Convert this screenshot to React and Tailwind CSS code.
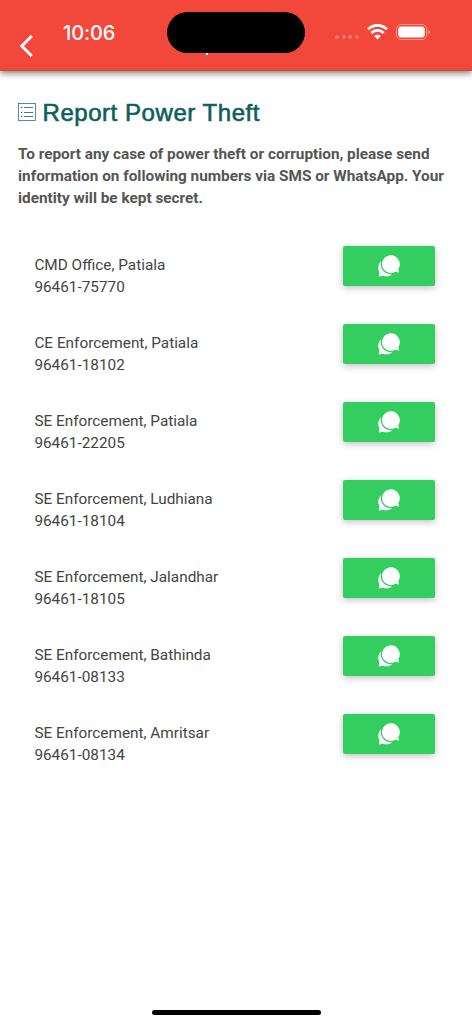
import React from "react";

const contacts = [
  { name: "CMD Office, Patiala", phone: "96461-75770" },
  { name: "CE Enforcement, Patiala", phone: "96461-18102" },
  { name: "SE Enforcement, Patiala", phone: "96461-22205" },
  { name: "SE Enforcement, Ludhiana", phone: "96461-18104" },
  { name: "SE Enforcement, Jalandhar", phone: "96461-18105" },
  { name: "SE Enforcement, Bathinda", phone: "96461-08133" },
  { name: "SE Enforcement, Amritsar", phone: "96461-08134" },
];

function ChatIcon() {
  return (
    <svg className="w-[22px] h-[22px]" viewBox="0 0 22 22" fill="white">
      <path d="M8 4.500A8.300 8.300 0 0 0 1.400 17.100L.8 21c0 .4.200.6.600.5l3.300-.8C8 22 12 21.500 15 18.500z" />
      {/* Front bubble, outlined in the button colour to separate it */}
      <path
        d="M12.900.200a8.900 8.900 0 1 0 4.500 16.600l3.100.8c.4.100.6-.1.500-.5l-.7-3.100A8.900 8.900 0 0 0 12.900.200z"
        stroke="#34cd60"
        strokeWidth="2.600"
        paintOrder="stroke"
      />
    </svg>
  );
}

function ListIcon() {
  return (
    <svg className="w-[18px] h-[18px]" viewBox="0 0 18 18" fill="none" stroke="#0d5f59">
      <rect x=".5" y=".5" width="17" height="17" strokeWidth=".7" />
      <path d="M6 4.500h9M6 9.500h9M6 13.500h9" strokeWidth=".8" />
      <path d="M3 4.500h1.200M3 9.500h1.200M3 13.500h1.200" strokeWidth="1.200" />
    </svg>
  );
}

function Header() {
  return (
    <header className="relative z-10 flex h-[71px] bg-[#f2483b] border-b border-[#db4136] shadow-[0_2px_7px_rgba(0,0,0,0.55)]">
      <button className="ml-5 mt-[35px] h-[22px]" aria-label="Back">
        <svg className="w-[13px] h-[22px]" viewBox="0 0 13 22" fill="none" stroke="white" strokeWidth="2.900">
          <path d="M11.800 1 1.900 11l9.900 10" />
        </svg>
      </button>
      <span className="ml-[30px] mt-[21px] w-[104px] text-[20px] leading-6 font-medium text-white font-['Inter',sans-serif] tracking-[-0.1px]">
        10:06
      </span>
      <div className="mt-[12px] w-[138px]">
        <div className="h-[41px] rounded-full bg-black" />
        {/* Descender of the title showing below the island */}
        <div className="ml-[39px] w-[2px] h-[2px] bg-white" />
      </div>
      <div className="ml-[30px] mt-[35px] flex gap-[2.500px]">
        <i className="size-1 rounded-full bg-white/25" />
        <i className="size-1 rounded-full bg-white/25" />
        <i className="size-1 rounded-full bg-white/25" />
        <i className="size-1 rounded-full bg-white/25" />
      </div>
      <svg className="ml-[8px] mt-[24px] w-[21px] h-[16px]" viewBox="0 0 21 16" fill="none" stroke="white">
        <path d="M1 5.200C6.400-.1 14.600-.1 20 5.200" strokeWidth="2.800" />
        <path d="M4.400 8.900c3.500-3.300 8.700-3.300 12.200 0" strokeWidth="2.700" />
        <path d="M7.200 12.100c1.900-1.800 4.700-1.800 6.600 0L10.500 15.400z" fill="white" stroke="none" />
      </svg>
      <svg className="ml-[8px] mt-[24px] w-[35px] h-[16px]" viewBox="0 0 35 16">
        <rect x=".5" y=".5" width="30" height="15" rx="4.500" fill="none" stroke="white" strokeOpacity=".4" />
        <rect x="2.300" y="2.500" width="26.400" height="11" rx="3" fill="white" />
        <path d="M32.200 5.700c2.300.9 2.300 3.700 0 4.600z" fill="white" fillOpacity=".45" />
      </svg>
    </header>
  );
}

export default function App() {
  return (
    <div className="flex flex-col w-[472px] h-[1024px] overflow-hidden bg-white font-['Roboto',sans-serif]">
      <Header />
      <main className="flex-1 pl-[18px]">
        <div className="flex mt-[25px] h-8 items-center gap-[6.500px]">
          <ListIcon />
          <h1 className="pt-[2px] text-[24px] leading-8 tracking-[0.550px] text-[#0d5f59] font-['Liberation_Sans',sans-serif] whitespace-nowrap [-webkit-text-stroke:0.6px_#0d5f59]">
            Report Power Theft
          </h1>
        </div>
        <p className="mt-[15px] text-[15.330px] leading-[22px] font-bold text-[#555555] whitespace-nowrap">
          To report any case of power theft or corruption, please send
          <br />
          information on following numbers via SMS or WhatsApp. Your
          <br />
          identity will be kept secret.
        </p>
        <div className="mt-[37px] ml-4 mr-[36px]">
          {contacts.map((contact) => (
            <div key={contact.phone} className="flex justify-between h-[78px]">
              <div className="mt-[8px] pl-[0.4px] text-[15.330px] leading-[22px] text-[#444444]">
                <p>{contact.name}</p>
                <p>{contact.phone}</p>
              </div>
              <button
                aria-label="Send message"
                className="mr-px flex w-[92px] h-10 items-center justify-center rounded-[2px] bg-[#34cd60] shadow-[0_2px_7px_rgba(0,0,0,0.25)]"
              >
                <ChatIcon />
              </button>
            </div>
          ))}
        </div>
      </main>
      <div className="mx-auto mb-[9.500px] w-[169px] h-[5px] rounded-full bg-black" />
    </div>
  );
}
